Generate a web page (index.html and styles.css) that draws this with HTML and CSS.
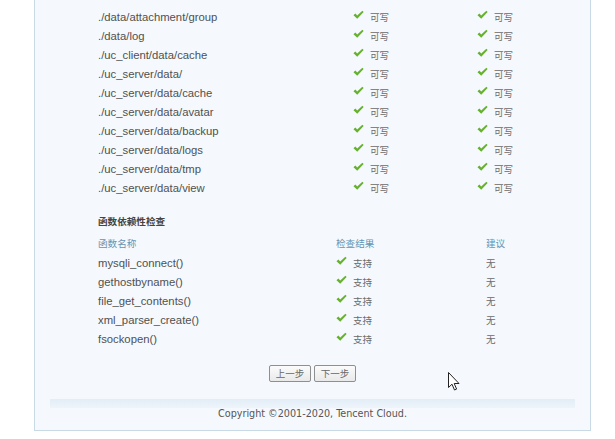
FILE: index.html
```html
<!DOCTYPE html>
<html lang="zh">
<head>
<meta charset="utf-8">
<title>安装向导</title>
<link rel="stylesheet" href="styles.css">
</head>
<body>
<div class="main">
  <div class="dirlist">
    <div class="drow"><span class="path">./data/attachment/group</span><span class="st"><svg class="ck" viewBox="0 0 12 10"><path d="M0.5 5.2 L2.6 3.4 L4.6 5.6 L10.2 0.4 L11.6 1.8 L4.6 9.2 Z"/></svg>可写</span><span class="st"><svg class="ck" viewBox="0 0 12 10"><path d="M0.5 5.2 L2.6 3.4 L4.6 5.6 L10.2 0.4 L11.6 1.8 L4.6 9.2 Z"/></svg>可写</span></div>
    <div class="drow"><span class="path">./data/log</span><span class="st"><svg class="ck" viewBox="0 0 12 10"><path d="M0.5 5.2 L2.6 3.4 L4.6 5.6 L10.2 0.4 L11.6 1.8 L4.6 9.2 Z"/></svg>可写</span><span class="st"><svg class="ck" viewBox="0 0 12 10"><path d="M0.5 5.2 L2.6 3.4 L4.6 5.6 L10.2 0.4 L11.6 1.8 L4.6 9.2 Z"/></svg>可写</span></div>
    <div class="drow"><span class="path">./uc_client/data/cache</span><span class="st"><svg class="ck" viewBox="0 0 12 10"><path d="M0.5 5.2 L2.6 3.4 L4.6 5.6 L10.2 0.4 L11.6 1.8 L4.6 9.2 Z"/></svg>可写</span><span class="st"><svg class="ck" viewBox="0 0 12 10"><path d="M0.5 5.2 L2.6 3.4 L4.6 5.6 L10.2 0.4 L11.6 1.8 L4.6 9.2 Z"/></svg>可写</span></div>
    <div class="drow"><span class="path">./uc_server/data/</span><span class="st"><svg class="ck" viewBox="0 0 12 10"><path d="M0.5 5.2 L2.6 3.4 L4.6 5.6 L10.2 0.4 L11.6 1.8 L4.6 9.2 Z"/></svg>可写</span><span class="st"><svg class="ck" viewBox="0 0 12 10"><path d="M0.5 5.2 L2.6 3.4 L4.6 5.6 L10.2 0.4 L11.6 1.8 L4.6 9.2 Z"/></svg>可写</span></div>
    <div class="drow"><span class="path">./uc_server/data/cache</span><span class="st"><svg class="ck" viewBox="0 0 12 10"><path d="M0.5 5.2 L2.6 3.4 L4.6 5.6 L10.2 0.4 L11.6 1.8 L4.6 9.2 Z"/></svg>可写</span><span class="st"><svg class="ck" viewBox="0 0 12 10"><path d="M0.5 5.2 L2.6 3.4 L4.6 5.6 L10.2 0.4 L11.6 1.8 L4.6 9.2 Z"/></svg>可写</span></div>
    <div class="drow"><span class="path">./uc_server/data/avatar</span><span class="st"><svg class="ck" viewBox="0 0 12 10"><path d="M0.5 5.2 L2.6 3.4 L4.6 5.6 L10.2 0.4 L11.6 1.8 L4.6 9.2 Z"/></svg>可写</span><span class="st"><svg class="ck" viewBox="0 0 12 10"><path d="M0.5 5.2 L2.6 3.4 L4.6 5.6 L10.2 0.4 L11.6 1.8 L4.6 9.2 Z"/></svg>可写</span></div>
    <div class="drow"><span class="path">./uc_server/data/backup</span><span class="st"><svg class="ck" viewBox="0 0 12 10"><path d="M0.5 5.2 L2.6 3.4 L4.6 5.6 L10.2 0.4 L11.6 1.8 L4.6 9.2 Z"/></svg>可写</span><span class="st"><svg class="ck" viewBox="0 0 12 10"><path d="M0.5 5.2 L2.6 3.4 L4.6 5.6 L10.2 0.4 L11.6 1.8 L4.6 9.2 Z"/></svg>可写</span></div>
    <div class="drow"><span class="path">./uc_server/data/logs</span><span class="st"><svg class="ck" viewBox="0 0 12 10"><path d="M0.5 5.2 L2.6 3.4 L4.6 5.6 L10.2 0.4 L11.6 1.8 L4.6 9.2 Z"/></svg>可写</span><span class="st"><svg class="ck" viewBox="0 0 12 10"><path d="M0.5 5.2 L2.6 3.4 L4.6 5.6 L10.2 0.4 L11.6 1.8 L4.6 9.2 Z"/></svg>可写</span></div>
    <div class="drow"><span class="path">./uc_server/data/tmp</span><span class="st"><svg class="ck" viewBox="0 0 12 10"><path d="M0.5 5.2 L2.6 3.4 L4.6 5.6 L10.2 0.4 L11.6 1.8 L4.6 9.2 Z"/></svg>可写</span><span class="st"><svg class="ck" viewBox="0 0 12 10"><path d="M0.5 5.2 L2.6 3.4 L4.6 5.6 L10.2 0.4 L11.6 1.8 L4.6 9.2 Z"/></svg>可写</span></div>
    <div class="drow"><span class="path">./uc_server/data/view</span><span class="st"><svg class="ck" viewBox="0 0 12 10"><path d="M0.5 5.2 L2.6 3.4 L4.6 5.6 L10.2 0.4 L11.6 1.8 L4.6 9.2 Z"/></svg>可写</span><span class="st"><svg class="ck" viewBox="0 0 12 10"><path d="M0.5 5.2 L2.6 3.4 L4.6 5.6 L10.2 0.4 L11.6 1.8 L4.6 9.2 Z"/></svg>可写</span></div>
  </div>

  <h3 class="title">函数依赖性检查</h3>
  <div class="funclist">
    <div class="frow head"><span>函数名称</span><span>检查结果</span><span>建议</span></div>
    <div class="frow"><span class="fn">mysqli_connect()</span><span class="st"><svg class="ck" viewBox="0 0 12 10"><path d="M0.5 5.2 L2.6 3.4 L4.6 5.6 L10.2 0.4 L11.6 1.8 L4.6 9.2 Z"/></svg>支持</span><span class="cn">无</span></div>
    <div class="frow"><span class="fn">gethostbyname()</span><span class="st"><svg class="ck" viewBox="0 0 12 10"><path d="M0.5 5.2 L2.6 3.4 L4.6 5.6 L10.2 0.4 L11.6 1.8 L4.6 9.2 Z"/></svg>支持</span><span class="cn">无</span></div>
    <div class="frow"><span class="fn">file_get_contents()</span><span class="st"><svg class="ck" viewBox="0 0 12 10"><path d="M0.5 5.2 L2.6 3.4 L4.6 5.6 L10.2 0.4 L11.6 1.8 L4.6 9.2 Z"/></svg>支持</span><span class="cn">无</span></div>
    <div class="frow"><span class="fn">xml_parser_create()</span><span class="st"><svg class="ck" viewBox="0 0 12 10"><path d="M0.5 5.2 L2.6 3.4 L4.6 5.6 L10.2 0.4 L11.6 1.8 L4.6 9.2 Z"/></svg>支持</span><span class="cn">无</span></div>
    <div class="frow"><span class="fn">fsockopen()</span><span class="st"><svg class="ck" viewBox="0 0 12 10"><path d="M0.5 5.2 L2.6 3.4 L4.6 5.6 L10.2 0.4 L11.6 1.8 L4.6 9.2 Z"/></svg>支持</span><span class="cn">无</span></div>
  </div>

  <div class="btns">
    <button class="btn" type="button">上一步</button>
    <button class="btn" type="button">下一步</button>
  </div>

  <div class="footbar"></div>
  <div class="copy">Copyright ©2001-2020, Tencent Cloud.</div>
</div>
<svg class="cursor" viewBox="0 0 12 19" width="12" height="19"><path d="M0.5 0.5 L0.5 15.5 L4 12.2 L6.5 18 L8.6 17.1 L6.2 11.5 L11 11.5 Z" fill="#fff" stroke="#222" stroke-width="1"/></svg>
</body>
</html>
```

FILE: styles.css
```css
* { box-sizing: border-box; }
html, body { margin: 0; padding: 0; background: #fff; }
body {
  font-family: "Liberation Sans", Arial, "Noto Sans CJK SC", sans-serif;
  font-size: 11.3px;
  color: #555;
  position: relative;
  width: 615px;
  height: 439px;
  overflow: hidden;
}
.main {
  margin-left: 34px;
  width: 557px;
  height: 431px;
  background: #f5f9fd;
  border: 1px solid #c8dae6;
  border-top: none;
  padding-top: 7px;
}
.dirlist { padding-left: 63px; }
.drow {
  display: grid;
  grid-template-columns: 255px 124px 1fr;
  height: 19px;
  align-items: center;
}
.path, .fn { color: #505050; }
.st, .cn {
  display: flex;
  align-items: center;
  font-family: "Noto Sans CJK SC", sans-serif;
  font-size: 9.5px;
  color: #6a6a6a;
}
.ck {
  width: 11px;
  height: 10px;
  fill: #67b12f;
  margin-right: 6px;
  margin-top: -3px;
  flex: none;
}
.title {
  margin: 17px 0 0 63px;
  font-family: "Noto Sans CJK SC", sans-serif;
  font-size: 9.6px;
  font-weight: bold;
  color: #444;
  height: 14px;
  line-height: 14px;
}
.funclist { padding-left: 63px; margin-top: 5px; }
.frow {
  display: grid;
  grid-template-columns: 238px 150px 1fr;
  height: 19px;
  align-items: center;
}
.frow.head { height: 20px; }
.frow.head span {
  color: #6494b3;
  font-family: "Noto Sans CJK SC", sans-serif;
  font-size: 9.6px;
}
.btns {
  display: flex;
  justify-content: center;
  gap: 3px;
  margin-top: 17px;
}
.btn {
  height: 17px;
  width: 42px;
  padding: 0;
  font-family: "Noto Sans CJK SC", sans-serif;
  font-size: 9.5px;
  color: #666;
  background: linear-gradient(#fbfbfb, #e9e9e9);
  border: 1px solid #8f8f8f;
  border-radius: 2px;
  line-height: 15px;
}
.footbar {
  margin: 17px 15px 0;
  height: 9px;
  background: linear-gradient(#e2edf7, #eef4fa);
}
.copy {
  text-align: center;
  font-family: "DejaVu Sans Condensed", "DejaVu Sans", sans-serif;
  font-size: 10.7px;
  color: #555;
  margin-top: -1px;
  line-height: 14px;
}
.cursor {
  position: absolute;
  left: 448px;
  top: 372px;
}
```
